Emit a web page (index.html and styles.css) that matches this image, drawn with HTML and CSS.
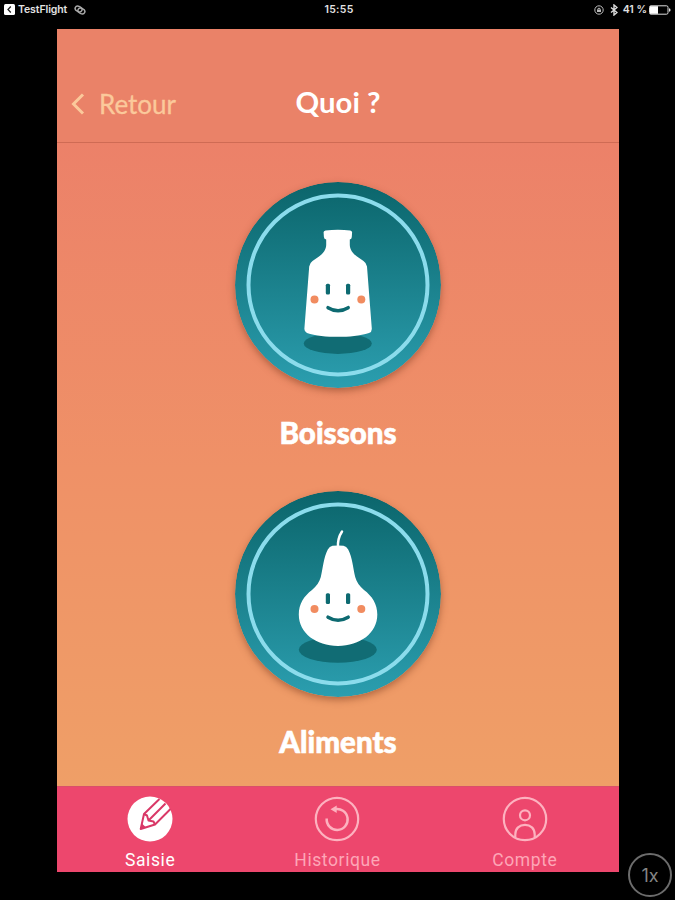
FILE: index.html
```html
<!DOCTYPE html>
<html lang="fr">
<head>
<meta charset="utf-8">
<title>Quoi ?</title>
<link rel="stylesheet" href="styles.css">
</head>
<body>
<header class="status">
  <div class="status-left">
    <svg width="11" height="11" viewBox="0 0 11 11"><rect width="11" height="11" rx="1.5" fill="#fff"/><path d="M6.8 2.500 4 5.500l2.800 3" fill="none" stroke="#222" stroke-width="1.300"/></svg>
    <span class="app-name">TestFlight</span>
    <svg class="link-icon" width="12" height="10" viewBox="0 0 12 10" fill="none" stroke="#aaa" stroke-width="1.500"><ellipse cx="4.600" cy="4" rx="3.600" ry="2.600" transform="rotate(25 4.600 4)"/><ellipse cx="7.400" cy="6" rx="3.600" ry="2.600" transform="rotate(25 7.400 6)"/></svg>
  </div>
  <span class="clock">15:55</span>
  <div class="status-right">
    <svg width="10" height="10" viewBox="0 0 10 10" fill="none" stroke="#bbb"><circle cx="5" cy="5" r="4.200"/><rect x="3" y="4.500" width="4" height="2.500" fill="#bbb" stroke="none"/><path d="M3.700 4.500a1.300 1.300 0 0 1 2.600 0"/></svg>
    <svg class="bluetooth" width="8" height="12" viewBox="0 0 8 12" fill="none" stroke="#ddd" stroke-width="1.400"><path d="m1 3.500 6 5L4 11V1l3 2.500-6 5"/></svg>
    <span class="charge">41 %</span>
    <svg width="22" height="10" viewBox="0 0 22 10"><rect x=".5" y=".8" width="18.500" height="8.400" rx="1.500" fill="none" stroke="#ddd"/><rect x="1" y="1.200" width="8" height="7.600" fill="#fff"/><path d="M20 3.200q1.600.3 1.600 1.800T20 6.800z" fill="#ddd"/></svg>
  </div>
</header>

<main class="app">
  <nav class="navbar">
    <a class="back">
      <svg width="14" height="24" viewBox="0 0 14 24"><path d="M12 2.500 2.500 12 12 21.500" fill="none" stroke="#fbc99b" stroke-width="3"/></svg>
      <span>Retour</span>
    </a>
    <h1 class="title">Quoi ?</h1>
  </nav>

  <section class="choices">
    <a class="choice">
      <svg class="disc" width="206" height="206" viewBox="0 0 206 206">
        <defs><linearGradient id="teal" x1="0" y1="0" x2="0" y2="1"><stop offset="0" stop-color="#0b656b"/><stop offset="1" stop-color="#2b9eaf"/></linearGradient></defs>
        <circle cx="103" cy="103" r="103" fill="url(#teal)"/>
        <circle cx="103" cy="103" r="89.500" fill="none" stroke="#8bdcec" stroke-width="4"/>
        <ellipse cx="102.800" cy="161.500" rx="34" ry="10.400" fill="#116c74"/>
        <path d="M90.500 48.400Q103 47 115.200 48.400Q117.200 48.700 117.100 50.500L116.800 55Q116.700 57 114.800 57.600L114.800 63C115 68 118 71.500 122 74.500L128.500 79Q131.700 81.200 132 84.500L136.800 146.500Q137 149.800 134 151C125 154 114 154.800 103 154.800S80 154 72 151Q69.200 149.800 69.400 146.500L74.200 84.500Q74.500 81.200 77.500 79L84 74.500C88 71.500 91 68 91.200 63L91.200 57.600Q89 57 88.900 55L88.600 50.500Q88.500 48.700 90.500 48.400Z" fill="#fff"/>
        <g fill="#0d6a71"><rect x="90.800" y="101.700" width="4.200" height="10.800" rx="1.500"/><rect x="111" y="101.700" width="4.200" height="10.800" rx="1.500"/></g>
        <g fill="#f18c60"><circle cx="79.500" cy="117.500" r="4"/><circle cx="126.300" cy="117.500" r="4"/></g>
        <path d="M93 125.700Q103 131.800 113.200 125.700" fill="none" stroke="#0d6a71" stroke-width="3.500" stroke-linecap="round"/>
      </svg>
      <span class="choice-label">Boissons</span>
    </a>
    <a class="choice">
      <svg class="disc" width="206" height="206" viewBox="0 0 206 206">
        <circle cx="103" cy="103" r="103" fill="url(#teal)"/>
        <circle cx="103" cy="103" r="89.500" fill="none" stroke="#8bdcec" stroke-width="4"/>
        <ellipse cx="102.800" cy="158.800" rx="39" ry="13" fill="#116c74"/>
        <path d="M97.500 54.800Q103 54 108.500 54.800Q111.500 55.500 113.200 58.500C117.500 67 118 77 120.200 86C121.500 91 124.500 95 129 99C137 105 142.300 113 142.300 123.500C142.300 142 125 154.900 103 154.900S63.800 142 63.800 123.500C63.800 113 69 105 77 99C81.500 95 84.500 91 85.800 86C88 77 88.500 67 92.800 58.500Q94.500 55.500 97.500 54.800Z" fill="#fff"/>
        <path d="M103 57C102.500 50 104 45 107 40.500" fill="none" stroke="#fff" stroke-width="2.500" stroke-linecap="round"/>
        <g fill="#0d6a71"><rect x="90.800" y="102.200" width="4.200" height="10.800" rx="1.500"/><rect x="111" y="102.200" width="4.200" height="10.800" rx="1.500"/></g>
        <g fill="#f18c60"><circle cx="79.500" cy="118" r="4"/><circle cx="126.300" cy="118" r="4"/></g>
        <path d="M93 126.200Q103 132.300 113.200 126.200" fill="none" stroke="#0d6a71" stroke-width="3.500" stroke-linecap="round"/>
      </svg>
      <span class="choice-label">Aliments</span>
    </a>
  </section>

  <footer class="tabbar">
    <a class="tab active">
      <svg width="46" height="46" viewBox="0 0 46 46"><circle cx="23" cy="23" r="22.500" fill="#fff"/><g fill="none" stroke="#d93867" stroke-width="2" stroke-linejoin="round"><path d="M32.500 3 17 18 13.700 33 28 28.500 43.500 13"/><path d="M17 18 20 19.500 21.500 24.500 26.500 25.500 28 28.500M21.500 24.500 38.500 7.500"/></g><path d="m13.700 33 1.200-5.500 4 3.800z" fill="#d93867"/></svg>
      <span>Saisie</span>
    </a>
    <a class="tab">
      <svg width="46" height="46" viewBox="0 0 46 46" fill="none" stroke="#fdb2bf" stroke-width="2.200"><circle cx="23" cy="23" r="21.200"/><path d="M12.700 22.500A10.500 10.500 0 1 0 20.500 13.300" stroke-width="2.500"/><path d="m16.500 13.200 6.200-3.800v7.600z" fill="#fdb2bf" stroke="none"/></svg>
      <span>Historique</span>
    </a>
    <a class="tab">
      <svg width="46" height="46" viewBox="0 0 46 46" fill="none" stroke="#fdb2bf" stroke-width="2.200"><circle cx="23" cy="23" r="21.200"/><circle cx="23" cy="19.300" r="5"/><path d="M13.300 41.500V38.500C13.300 32.500 17.500 28.800 23 28.800S32.700 32.500 32.700 38.500V41.500"/></svg>
      <span>Compte</span>
    </a>
  </footer>
</main>
<div class="zoom">1x</div>
</body>
</html>
```

FILE: styles.css
```css
* { box-sizing: border-box; }
body {
  margin: 0;
  width: 675px;
  height: 900px;
  overflow: hidden;
  position: relative;
  background: #000;
  color: #fff;
  font-family: Lato, sans-serif;
}
svg { display: block; flex: none; }
.status {
  height: 28.5px;
  padding: 0 4px;
  display: grid;
  grid-template-columns: 1fr auto 1fr;
  align-items: start;
  font: 600 10.5px/19px Inter, sans-serif;
  color: #e2e2e2;
}
.status-left, .status-right { display: flex; align-items: center; height: 19px; }
.app-name { margin-left: 3px; letter-spacing: -.1px; }
.link-icon { margin-left: 7px; }
.clock { padding-left: 3px; letter-spacing: .3px; }
.status-right { justify-content: flex-end; }
.bluetooth { margin: 0 5px 0 6px; }
.charge { margin-right: 2px; white-space: nowrap; }
.app {
  width: 562px;
  height: 843.5px;
  margin-left: 57px;
  display: flex;
  flex-direction: column;
  background: linear-gradient(#ed8068 0, #ec8169 114px, #ef9167 440px, #ef9f67 757px);
}
.navbar {
  height: 114px;
  flex: none;
  padding: 54px 14px 0;
  display: grid;
  grid-template-columns: 1fr auto 1fr;
  align-items: start;
  background: #ea8268;
  border-bottom: 1.5px solid #cf6b54;
}
.back {
  height: 42px;
  display: flex;
  align-items: center;
  gap: 14px;
  color: #fbc99b;
  font-size: 26px;
  -webkit-text-stroke: .3px;
}
.title { margin: 0; font-size: 29.3px; font-weight: 700; line-height: 37px; }
.choices {
  height: 643px;
  flex: none;
  padding-top: 39.5px;
  display: flex;
  flex-direction: column;
  align-items: center;
}
.choice {
  height: 309px;
  flex: none;
  display: flex;
  flex-direction: column;
  align-items: center;
}
.disc { border-radius: 50%; box-shadow: 0 3px 7px rgba(120, 55, 30, .5); }
.choice-label {
  margin-top: 26px;
  font-size: 29.5px;
  font-weight: 900;
  line-height: 38px;
  -webkit-text-stroke: .6px;
}
.tabbar {
  flex: 1;
  display: grid;
  grid-template-columns: repeat(3, 1fr);
  background: #ed476d;
  border-top: 1.5px solid #d8506a;
}
.tab {
  padding: 9.5px 1px 0 0;
  display: flex;
  flex-direction: column;
  align-items: center;
  color: #fda6b7;
  font: 400 17.5px/22px Roboto, sans-serif;
  letter-spacing: .6px;
}
.tab span { margin-top: 7px; }
.tab.active { color: #fff; }
.zoom {
  position: absolute;
  left: 628px;
  top: 853px;
  width: 44px;
  height: 44px;
  border: 2px solid #6c6c6c;
  border-radius: 50%;
  text-align: center;
  font: 400 18px/41px Inter, sans-serif;
  color: #858585;
}
```
